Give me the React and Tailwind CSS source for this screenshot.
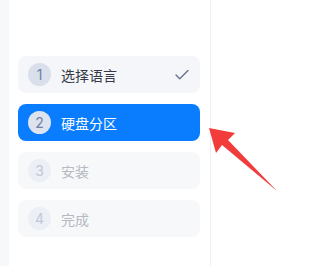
import { Check } from "lucide-react";

const steps = [
  { n: 1, label: "选择语言", state: "done" },
  { n: 2, label: "硬盘分区", state: "active" },
  { n: 3, label: "安装", state: "todo" },
  { n: 4, label: "完成", state: "todo" },
];

const StepItem = ({ step }) => {
  const active = step.state === "active";
  const done = step.state === "done";
  const box = active ? "bg-[#0a7dff] text-white" : done ? "bg-[#f5f6f9] text-[#353a46]" : "bg-[#f7f8fa] text-[#b5b9c2]";
  const dot = active
    ? "bg-[#dde3ef] text-[#7080a3]"
    : done
    ? "bg-[#d9dfeb] text-[#7080a3]"
    : "bg-[#eceff5] text-[#c0c7d5]";

  return (
    <div className={`flex h-[37px] items-center rounded-lg pl-[10px] pr-[9px] ${box}`}>
      <div className={`flex h-[23px] w-[23px] items-center justify-center rounded-full text-[14px] ${dot}`} style={{ fontFamily: "Inter, sans-serif" }}>
        {step.n}
      </div>
      <span className="ml-[10px] flex-1 text-[14px] leading-none">{step.label}</span>
      {done && <Check size={18} strokeWidth={1.8} className="text-[#66718f]" />}
    </div>
  );
};

export default function App() {
  return (
    <div className="relative flex h-[266px] w-[296px] bg-white" style={{ fontFamily: '"Noto Sans CJK SC", "Noto Sans", sans-serif' }}>
      <div className="w-[9px] bg-[#f7f8fa]" />
      <div className="flex w-[202px] flex-col gap-[11px] border-r border-[#eef0f3] pl-[9px] pr-[10px] pt-[56px]">
        {steps.map((s) => (
          <StepItem key={s.n} step={s} />
        ))}
      </div>
      <div className="flex-1" />
      <svg className="absolute left-0 top-0" width="296" height="266" viewBox="0 0 296 266">
        <polygon points="209,128 235,133 228,140 277,191 222,145 216,153" fill="#f23c3c" />
      </svg>
    </div>
  );
}
